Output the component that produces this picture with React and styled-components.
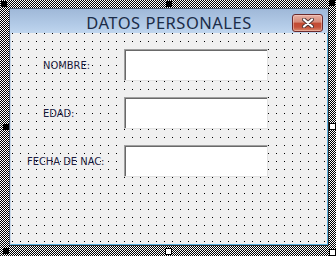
import React from "react";
import styled, { createGlobalStyle } from "styled-components";

const GlobalStyle = createGlobalStyle`
  html, body {
    margin: 0;
    padding: 0;
    background: #ffffff;
  }
`;

const fields = [
  { label: "NOMBRE:", indent: 32 },
  { label: "EDAD:", indent: 32 },
  { label: "FECHA DE NAC:", indent: 16 },
];

const handles = [
  { x: 1, y: 1, open: false },
  { x: 166, y: 1, open: false },
  { x: 329, y: 0, open: false },
  { x: 3, y: 124, open: false },
  { x: 329, y: 123, open: true },
  { x: 3, y: 248, open: false },
  { x: 165, y: 248, open: true },
  { x: 329, y: 249, open: true },
];

export default function App() {
  return (
    <>
      <GlobalStyle />
      <Designer>
        <Form>
          <TitleBar>
            <span />
            <Title>DATOS PERSONALES</Title>
            <CloseButton>
              <svg width="12" height="10" viewBox="0 0 12 10">
                <path
                  d="M2 1.5 L10 8.5 M10 1.5 L2 8.5"
                  stroke="#4d3434"
                  strokeWidth="4"
                  strokeLinecap="round"
                />
                <path
                  d="M2 1.5 L10 8.5 M10 1.5 L2 8.5"
                  stroke="#ffffff"
                  strokeWidth="2.2"
                  strokeLinecap="round"
                />
              </svg>
            </CloseButton>
          </TitleBar>
          <Client>
            {fields.map((f) => (
              <Row key={f.label}>
                <Label $indent={f.indent}>{f.label}</Label>
                <TextBox />
              </Row>
            ))}
          </Client>
        </Form>
        {handles.map((h, i) => (
          <Handle key={i} $open={h.open} style={{ left: h.x, top: h.y }} />
        ))}
      </Designer>
    </>
  );
}

const Designer = styled.div`
  position: relative;
  width: 336px;
  height: 256px;
  box-sizing: border-box;
  padding: 8px 7px 10px 9px;
  background: repeating-conic-gradient(#000 0 25%, #fff 0 50%) 0 0 / 2px 2px;
  overflow: hidden;
`;

const Form = styled.div`
  width: 320px;
  height: 238px;
  box-sizing: border-box;
  border: 1px solid #4e5d72;
  border-right-color: #2b2b2b;
  border-bottom-color: #2b2b2b;
  display: flex;
  flex-direction: column;
`;

const TitleBar = styled.div`
  height: 24px;
  flex: none;
  display: grid;
  grid-template-columns: 1fr auto 1fr;
  align-items: center;
  background: linear-gradient(#9fb8d8, #b4cce8 70%, #c0d6ee);
`;

const Title = styled.span`
  font-family: "Noto Sans", "Open Sans", sans-serif;
  font-size: 16.5px;
  letter-spacing: 0.5px;
  color: #1b2c48;
  line-height: 24px;
  white-space: nowrap;
  padding-top: 2px;
`;

const CloseButton = styled.div`
  justify-self: end;
  margin-right: 5px;
  margin-top: 2px;
  width: 31px;
  height: 18px;
  box-sizing: border-box;
  border: 1px solid #6b2a2c;
  border-radius: 3px;
  display: flex;
  align-items: center;
  justify-content: center;
  background: linear-gradient(
    #e7b0a4,
    #d58a78 45%,
    #c24a32 50%,
    #c5503a 75%,
    #d98a6c
  );
  box-shadow: inset 0 0 0 1px rgba(255, 220, 210, 0.45);
`;

/* design grid: 1px dots every 8px, drawn as columns masked by rows */
const Client = styled.div`
  position: relative;
  flex: 1;
  box-sizing: border-box;
  border-left: 1px solid #c9d9ea;
  border-right: 1px solid #5cb3e3;
  border-bottom: 1px solid #5cb3e3;
  background-color: #f0f0f0;
  padding-top: 16px;
  display: flex;
  flex-direction: column;
  gap: 16px;

  &::before {
    content: "";
    position: absolute;
    inset: 0;
    background: linear-gradient(to right, #000 1px, transparent 1px) 1px 0 / 8px 8px;
    -webkit-mask: linear-gradient(to bottom, #000 1px, transparent 1px) 0 0 / 8px 8px;
    mask: linear-gradient(to bottom, #000 1px, transparent 1px) 0 0 / 8px 8px;
  }
`;

const Row = styled.div`
  position: relative;
  display: grid;
  grid-template-columns: 113px 144px;
  align-items: center;
  height: 32px;
`;

const Label = styled.span`
  margin-left: ${(p) => p.$indent}px;
  font-family: "DejaVu Sans Condensed", "DejaVu Sans", sans-serif;
  font-stretch: condensed;
  font-size: 11px;
  line-height: 13px;
  color: #1a1a3e;
  white-space: nowrap;
`;

const TextBox = styled.div`
  height: 32px;
  box-sizing: border-box;
  background: #ffffff;
  border: 1px solid;
  border-color: #a0a0a0 #e3e3e3 #e3e3e3 #a0a0a0;
  box-shadow: inset 1px 1px 0 #696969;
`;

const Handle = styled.div`
  position: absolute;
  width: 6px;
  height: 6px;
  box-sizing: border-box;
  background: ${(p) => (p.$open ? "#ffffff" : "#000000")};
  border: 1px solid #000;
  ${(p) => p.$open && "width: 7px; height: 7px;"}
`;
